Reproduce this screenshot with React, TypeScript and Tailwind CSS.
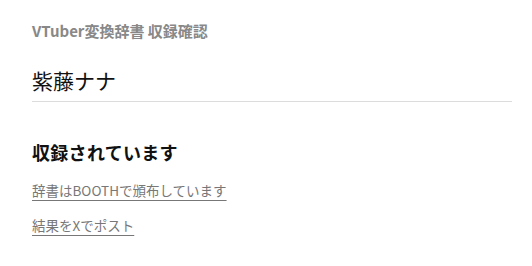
export default function App() {
  return (
    <div className="min-h-screen bg-white font-['Noto_Sans_CJK_JP',sans-serif]">
      <div className="w-[512px] pl-8 pt-[22px]">
        <h1 className="text-[15px] font-bold leading-[18px] text-[#888]">VTuber変換辞書 収録確認</h1>

        <div className="mt-[25px] border-b border-[#dcdcdc] pb-[6px]">
          <p className="text-[21px] leading-[30px] text-[#111]">紫藤ナナ</p>
        </div>

        <h2 className="mt-[38px] text-[18px] font-bold leading-[24px] tracking-[0.3px] text-[#111]">収録されています</h2>

        <div className="mt-[16px] flex flex-col items-start gap-[15px]">
          <a href="#" className="text-[13.5px] leading-[20px] text-[#777] underline decoration-[#777] underline-offset-[4px]">
            辞書はBOOTHで頒布しています
          </a>
          <a href="#" className="text-[13.5px] leading-[20px] text-[#777] underline decoration-[#777] underline-offset-[4px]">
            結果をXでポスト
          </a>
        </div>
      </div>
    </div>
  );
}
